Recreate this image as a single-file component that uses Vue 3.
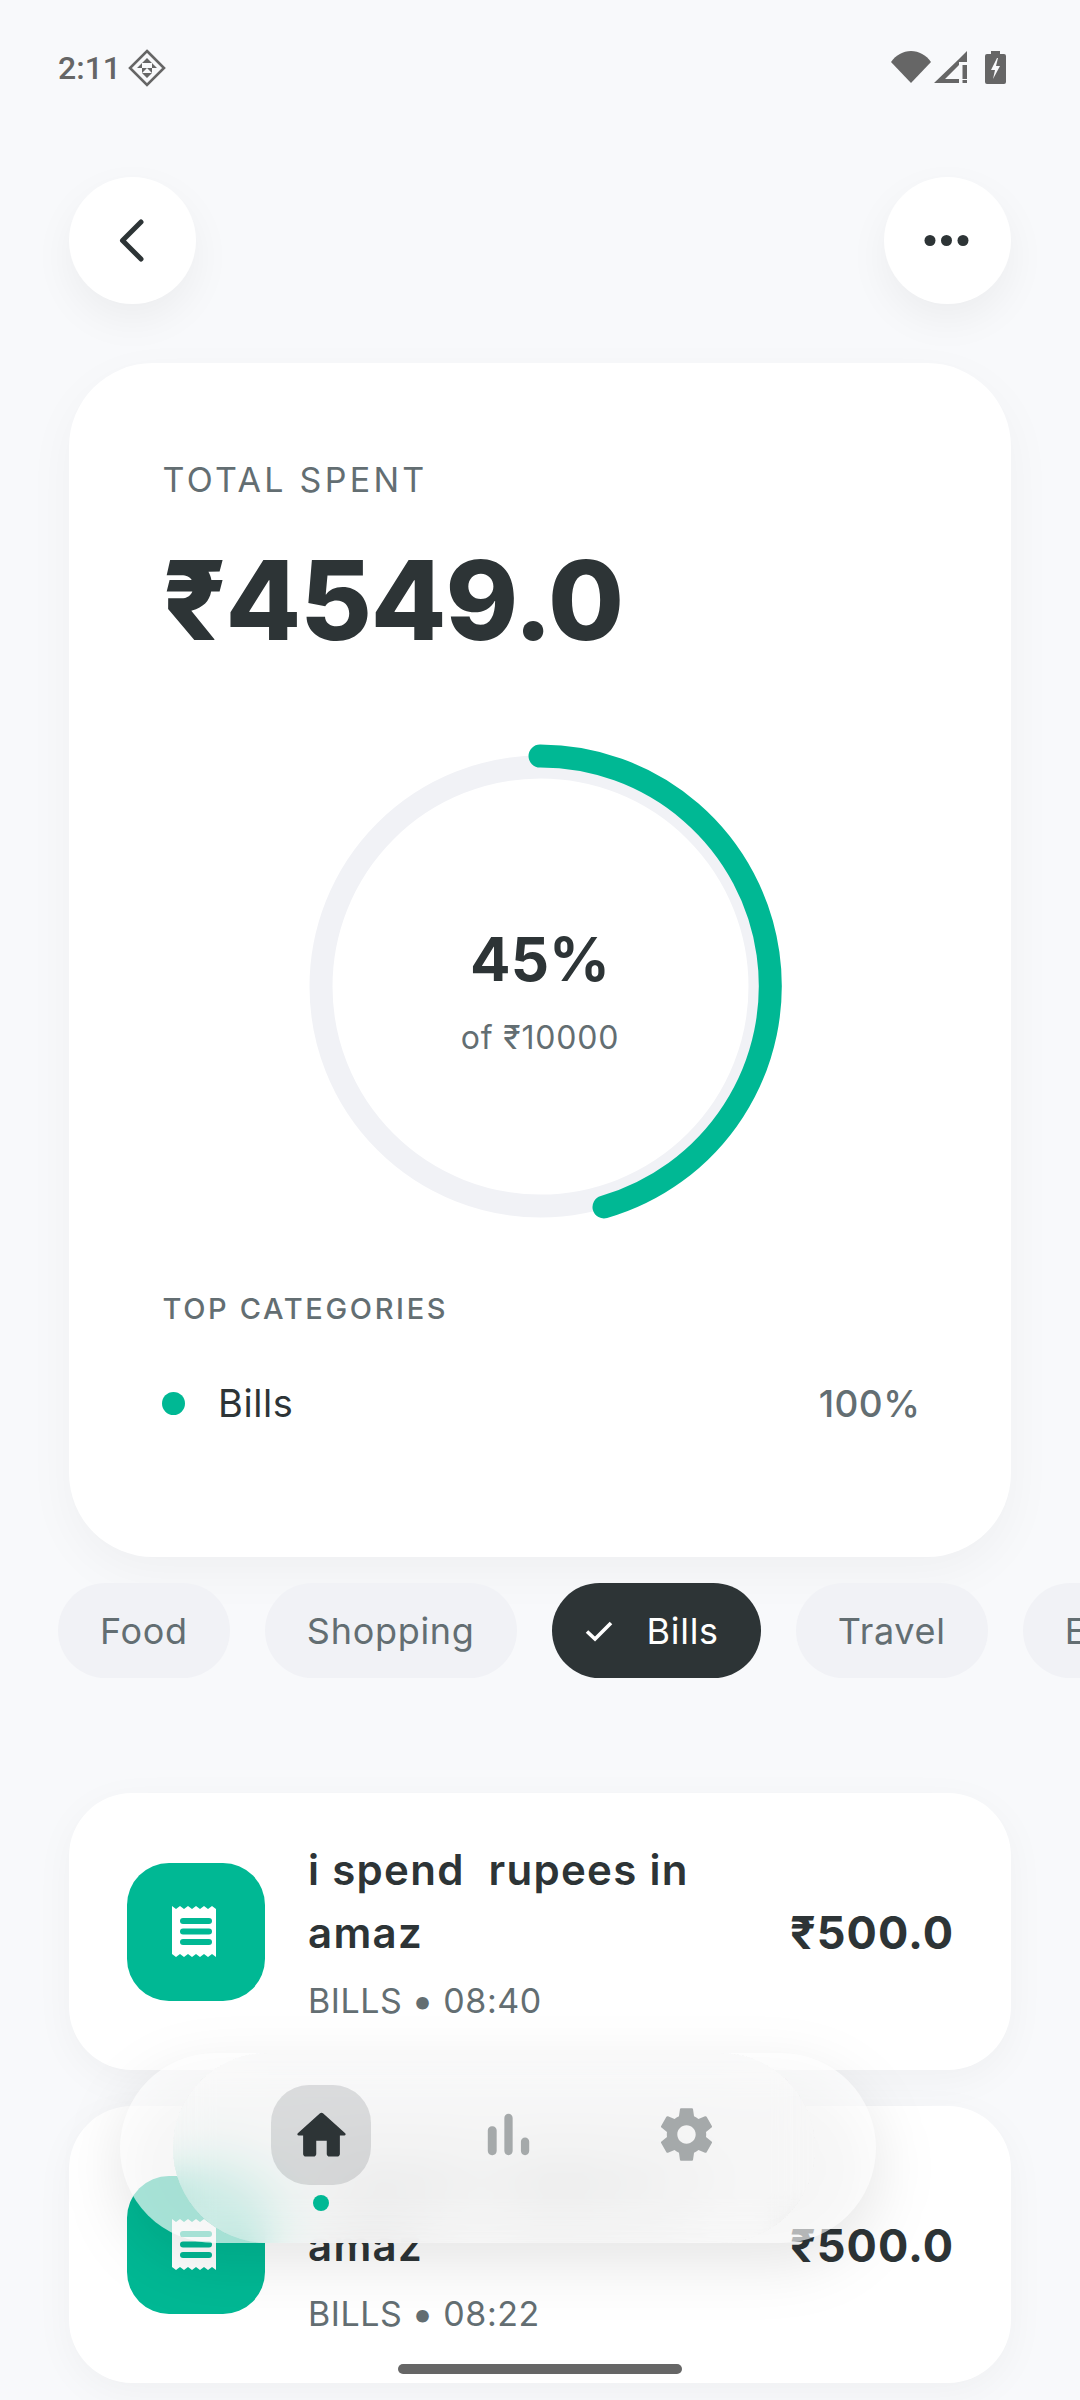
<script setup>
const chips = [
  { label: 'Food' },
  { label: 'Shopping' },
  { label: 'Bills', active: true },
  { label: 'Travel' },
  { label: 'Education' },
]
const txns = [
  { title: 'i spend  rupees in amaz', cat: 'BILLS', time: '08:40', amount: '₹500.0' },
  { title: 'i spend  rupees in amaz', cat: 'BILLS', time: '08:22', amount: '₹500.0' },
]
</script>

<template>
  <div class="page">
    <div class="status">
      <div class="status-left">
        <span class="time">2:11</span>
        <svg class="st-diamond" viewBox="0 0 38 38" width="38" height="38">
          <path d="M19 2 36 19 19 36 2 19Z" fill="none" stroke="#666" stroke-width="2.6" />
          <path d="M19 9l5 5h-5zM19 9v5h-5zM9 19l5-5v5zM29 19l-5-5v5zM19 29l-5-5h5zM19 29v-5h5zM14 19h5l-5 5zM24 19h-5l5 5z" fill="#666" />
        </svg>
      </div>
      <div class="status-right">
        <svg viewBox="0 0 40 32" width="40" height="32"><path d="M0 11C5 4 12 0 20 0s15 4 20 11L20 32Z" fill="#666" /></svg>
        <svg viewBox="0 0 33 32" width="33" height="32"><path d="M0 32 25 8v6L11 28h14v4ZM25 8l8-8v11h-8ZM28.5 14H33v14h-4.500ZM28.500 29H33v3h-4.500Z" fill="#666" /></svg>
        <svg viewBox="0 0 21 33" width="21" height="33"><path d="M6 0h9v3h4a2 2 0 0 1 2 2v26a2 2 0 0 1-2 2H2a2 2 0 0 1-2-2V5a2 2 0 0 1 2-2h4Z" fill="#666" /><path d="M12 7 6 19h4l-2 9 7-13h-4l2-8Z" fill="#f8f9fb" /></svg>
      </div>
    </div>

    <div class="header">
      <button class="round">
        <svg viewBox="0 0 127 127" width="127" height="127"><path d="M72 45 53.500 63.500 72 82" fill="none" stroke="#2d3436" stroke-width="5" stroke-linecap="round" stroke-linejoin="round" /></svg>
      </button>
      <button class="round">
        <svg viewBox="0 0 127 127" width="127" height="127"><circle cx="46" cy="63.500" r="5.500" fill="#2d3436" /><circle cx="62.500" cy="63.500" r="5.500" fill="#2d3436" /><circle cx="79" cy="63.500" r="5.500" fill="#2d3436" /></svg>
      </button>
    </div>

    <section class="summary">
      <div class="label">TOTAL SPENT</div>
      <div class="total">₹4549.0</div>
      <div class="ring">
        <svg viewBox="0 0 500 500" width="500" height="500">
          <circle cx="250.500" cy="250.500" r="219.500" fill="none" stroke="#f1f2f6" stroke-width="23" />
          <path d="M250 20A230 230 0 0 1 314 471" fill="none" stroke="#00b894" stroke-width="23" stroke-linecap="round" />
        </svg>
        <div class="ring-text">
          <div class="pct">45%</div>
          <div class="of">of ₹10000</div>
        </div>
      </div>
      <div class="top-label">TOP CATEGORIES</div>
      <div class="cat">
        <span class="cat-dot"></span>
        <span class="cat-name">Bills</span>
        <span class="cat-pct">100%</span>
      </div>
    </section>

    <div class="chips">
      <div v-for="c in chips" :key="c.label" class="chip" :class="{ active: c.active }">
        <svg v-if="c.active" class="check" viewBox="0 0 30 30" width="30" height="30"><path d="M3 15.500 11 23 27 7" fill="none" stroke="#fff" stroke-width="3.600" /></svg>
        <span>{{ c.label }}</span>
      </div>
    </div>

    <div class="list">
      <div v-for="t in txns" :key="t.time" class="txn">
        <div class="txn-icon">
          <svg viewBox="0 0 48 51" width="48" height="51">
            <path d="M0 0l4 3 4-3 4 3 4-3 4 3 4-3 4 3 4-3 4 3 4-3 4 3V0v51l-4-3-4 3-4-3-4 3-4-3-4 3-4-3-4 3-4-3-4 3-4-3Z" fill="#fff" />
            <rect x="8" y="12" width="32" height="6" rx="3" fill="#00b894" />
            <rect x="8" y="22.500" width="32" height="6" rx="3" fill="#00b894" />
            <rect x="8" y="33" width="32" height="6" rx="3" fill="#00b894" />
          </svg>
        </div>
        <div class="txn-body">
          <div class="txn-title">{{ t.title }}</div>
          <div class="txn-sub">{{ t.cat }} <span class="bullet">•</span> {{ t.time }}</div>
        </div>
        <div class="txn-amount">{{ t.amount }}</div>
      </div>
    </div>

    <div class="glass-shadow"></div>
    <nav class="glass">
      <div class="glass-blur"></div>
      <div class="glass-blur"></div>
      <div class="glass-blur"></div>
      <div class="glass-blur tint"></div>
      <div class="nav-items">
        <div class="nav-home">
          <div class="tile">
            <svg viewBox="0 0 24 24" width="63" height="63"><path fill="#2d3436" d="M10 19v-5h4v5c0 .55.45 1 1 1h3c.55 0 1-.45 1-1v-7h1.700c.46 0 .68-.57.33-.87L12.670 3.600c-.38-.34-.96-.34-1.340 0l-8.360 7.530c-.34.3-.13.87.33.87H5v7c0 .55.45 1 1 1h3c.55 0 1-.45 1-1z" /></svg>
          </div>
          <span class="nav-dot"></span>
        </div>
        <svg class="nav-bars" viewBox="0 0 24 24" width="71" height="71"><path fill="#a5a9aa" d="M6.400 9.200h.2c.77 0 1.400.63 1.400 1.400v7c0 .77-.63 1.400-1.400 1.400h-.2c-.77 0-1.400-.63-1.400-1.400v-7c0-.77.63-1.400 1.400-1.400zM12 5c.77 0 1.400.63 1.400 1.400v11.200c0 .77-.63 1.400-1.400 1.400-.77 0-1.400-.63-1.400-1.400V6.400c0-.77.63-1.400 1.400-1.400zm5.600 8c.77 0 1.400.63 1.400 1.400v3.200c0 .77-.63 1.400-1.400 1.400-.77 0-1.400-.63-1.400-1.400v-3.200c0-.77.63-1.400 1.400-1.400z" /></svg>
        <svg class="nav-gear" viewBox="0 0 24 24" width="63" height="63"><path fill="#a5a9aa" d="M19.430 12.980c.04-.32.07-.64.07-.98s-.03-.66-.07-.98l2.110-1.650c.19-.15.24-.42.12-.64l-2-3.460c-.12-.22-.39-.3-.61-.22l-2.490 1c-.52-.4-1.080-.73-1.690-.98l-.38-2.650C14.460 2.180 14.250 2 14 2h-4c-.25 0-.46.18-.49.42l-.38 2.650c-.61.25-1.170.59-1.690.98l-2.490-1c-.23-.09-.49 0-.61.22l-2 3.460c-.13.22-.07.49.12.64l2.110 1.650c-.04.32-.07.65-.07.98s.03.66.07.98l-2.110 1.650c-.19.15-.24.42-.12.64l2 3.460c.12.22.39.3.61.22l2.490-1c.52.4 1.080.73 1.690.98l.38 2.650c.03.24.24.42.49.42h4c.25 0 .46-.18.49-.42l.38-2.650c.61-.25 1.170-.59 1.690-.98l2.490 1c.23.09.49 0 .61-.22l2-3.460c.12-.22.07-.49-.12-.64l-2.110-1.650zM12 15.500c-1.930 0-3.500-1.570-3.500-3.500s1.570-3.500 3.500-3.500 3.500 1.570 3.500 3.500-1.570 3.500-3.500 3.500z" /></svg>
      </div>
    </nav>

    <div class="home-bar"></div>
  </div>
</template>

<style>
html, body { margin: 0; background: #f8f9fb; }
</style>

<style scoped>
.page {
  position: relative;
  width: 1080px;
  height: 2400px;
  overflow: hidden;
  background: #f8f9fb;
  font-family: Inter, "Noto Sans", sans-serif;
  color: #2d3436;
}
.status {
  height: 90px;
  padding: 0 74px 0 58px;
  display: flex;
  justify-content: space-between;
  box-sizing: border-box;
}
.status-left { display: flex; align-items: center; gap: 7px; height: 136px; }
.status-right { display: flex; align-items: center; gap: 3px; height: 134px; }
.status-right svg:last-child { margin-left: 15px; }
.time { font-family: Roboto, sans-serif; font-size: 32px; font-weight: 500; color: #666; }
.header {
  margin: 87px 69px 0;
  display: flex;
  justify-content: space-between;
}
.round {
  width: 127px;
  height: 127px;
  padding: 0;
  border: 0;
  border-radius: 50%;
  background: #fff;
  box-shadow: 0 16px 42px rgba(0, 0, 0, .05);
}
.round svg { display: block; }
.summary {
  margin: 59px 69px 0;
  height: 1194px;
  box-sizing: border-box;
  padding: 97px 93.5px 0;
  background: #fff;
  border-radius: 84px;
  box-shadow: 0 16px 50px rgba(0, 0, 0, .04);
}
.label {
  font-size: 34px;
  line-height: 40px;
  letter-spacing: 3.3px;
  color: #636e72;
}
.total {
  margin-top: 35px;
  font-size: 110px;
  line-height: 130px;
  font-weight: 800;
  letter-spacing: -1.1px;
}
.ring {
  margin-top: 71px;
  display: grid;
  justify-content: center;
  align-items: center;
}
.ring > * { grid-area: 1 / 1; }
.ring svg { display: block; }
.ring-text { text-align: center; padding-top: 6px; }
.pct { font-size: 60px; line-height: 80px; font-weight: 700; }
.of { margin-top: 17px; font-size: 32px; line-height: 44px; letter-spacing: .8px; color: #636e72; }
.top-label {
  margin-top: 55px;
  font-size: 29px;
  line-height: 36px;
  font-weight: 500;
  letter-spacing: 2.65px;
  color: #636e72;
}
.cat {
  margin: 51px -3px 0 -1px;
  height: 50px;
  display: flex;
  align-items: center;
}
.cat-dot { width: 23px; height: 23px; border-radius: 50%; background: #00b894; }
.cat-name { margin-left: 33.5px; font-size: 38px; letter-spacing: .6px; }
.cat-pct { margin-left: auto; font-size: 37px; font-weight: 500; letter-spacing: .5px; color: #636e72; }
.chips {
  margin: 26px 0 0 58px;
  display: flex;
  gap: 35px;
  width: 1200px;
}
.chip {
  height: 95px;
  padding: 0 42px;
  display: flex;
  align-items: center;
  border-radius: 48px;
  background: #f1f2f6;
  color: #636e72;
  font-size: 36px;
  letter-spacing: .7px;
  flex: none;
}
.chip.active { padding: 0 42px 0 32px; gap: 33px; background: #2d3436; color: #fff; }
.check { display: block; }
.list {
  margin: 115px 69px 0;
  display: flex;
  flex-direction: column;
  gap: 36px;
}
.txn {
  height: 277px;
  box-sizing: border-box;
  padding: 0 57px 0 58px;
  display: flex;
  align-items: center;
  gap: 43px;
  background: #fff;
  border-radius: 63px;
  box-shadow: 0 10px 40px rgba(0, 0, 0, .04);
}
.txn-icon {
  width: 138px;
  height: 138px;
  flex: none;
  border-radius: 42px;
  background: #00b894;
  display: flex;
  align-items: center;
  justify-content: center;
}
.txn-icon svg { display: block; }
.txn-body { flex: 1; min-width: 0; margin-top: -4.5px; }
.txn-title {
  font-size: 42px;
  line-height: 63px;
  font-weight: 600;
  letter-spacing: 1.3px;
  white-space: pre-wrap;
}
.txn-sub { margin-top: 16.5px; font-size: 34px; line-height: 40px; letter-spacing: .55px; color: #636e72; }
.bullet { font-size: 40px; line-height: 0; margin: 0 -1.2px; vertical-align: -2px; }
.txn-amount { flex: none; margin-top: 2px; font-size: 45px; font-weight: 700; letter-spacing: 1px; }
.glass-shadow {
  position: absolute;
  left: 120px;
  top: 2073px;
  width: 756px;
  height: 190px;
  border-radius: 95px;
  background: rgba(0, 0, 0, .1);
  filter: blur(30px);
}
.glass {
  position: absolute;
  left: 120px;
  top: 2053px;
  width: 756px;
  height: 190px;
  border-radius: 95px;
  background: rgba(255, 255, 255, .65);
}
.glass-blur {
  position: absolute;
  left: 53px;
  right: 61px;
  top: 0;
  bottom: 0;
  border-radius: 95px;
  -webkit-backdrop-filter: blur(18px);
  backdrop-filter: blur(18px);
}
.tint { background: rgba(250, 251, 251, .15); }
.nav-items {
  position: absolute;
  left: 151px;
  top: 32px;
  display: flex;
  align-items: flex-start;
}
.nav-home { width: 100px; display: flex; flex-direction: column; align-items: center; }
.tile {
  width: 100px;
  height: 100px;
  border-radius: 38px;
  background: rgba(45, 52, 54, .14);
  display: flex;
  align-items: center;
  justify-content: center;
}
.tile svg { display: block; }
.nav-dot { margin-top: 10px; width: 16px; height: 16px; border-radius: 50%; background: #00b894; }
.nav-bars { margin: 14px 0 0 102px; }
.nav-gear { margin: 18px 0 0 111px; }
.home-bar {
  position: absolute;
  left: 398px;
  top: 2364px;
  width: 284px;
  height: 10px;
  border-radius: 5px;
  background: #666;
}
</style>
